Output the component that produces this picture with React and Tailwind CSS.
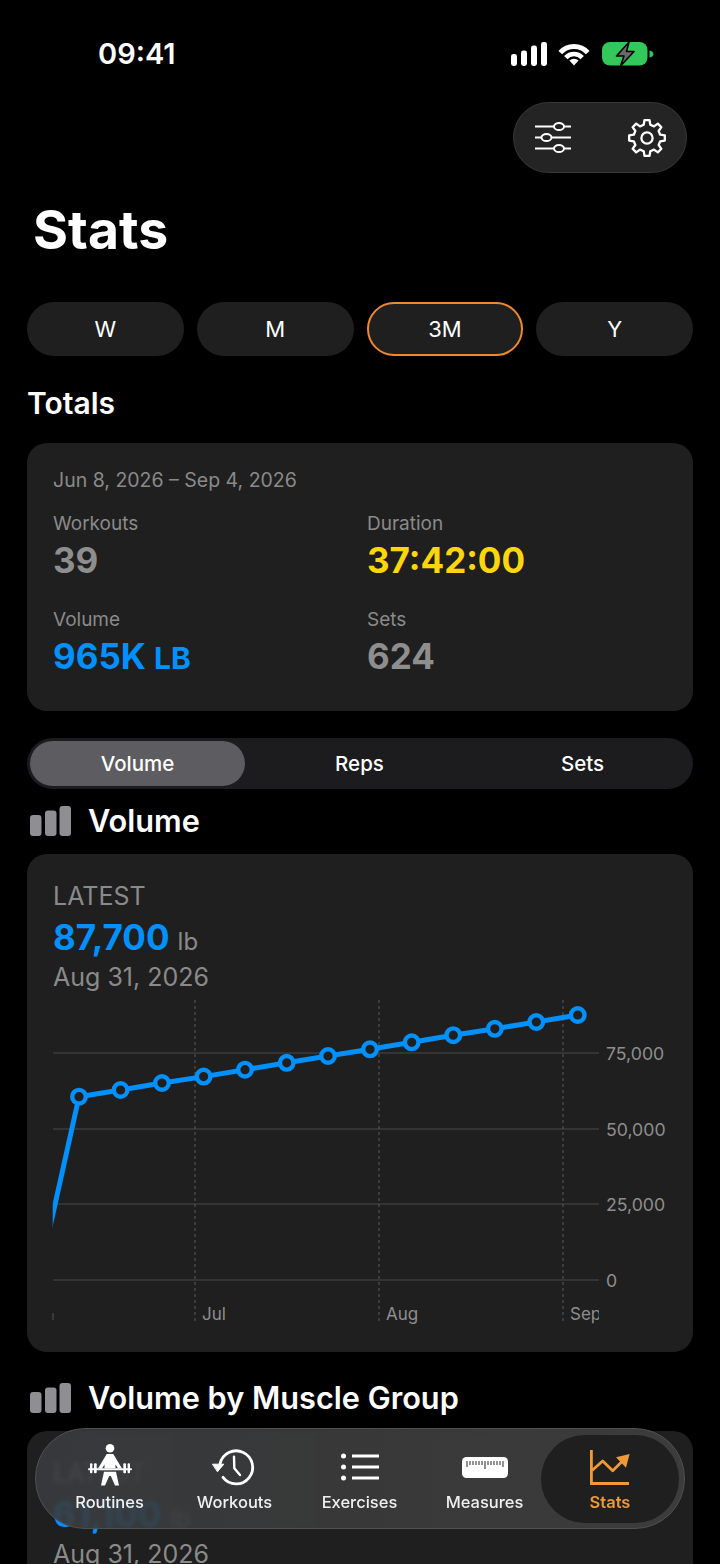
import React from 'react';

const BLUE = '#0091ff';
const CARD = '#1f1f1f';

const points = [
  [79, 1096.7], [120.6, 1090], [162, 1083], [203.6, 1076.6], [245, 1069.7], [286.7, 1062.8], [328, 1056],
  [370, 1049.3], [411.7, 1042.3], [453.3, 1035.2], [494.8, 1028.8], [536.3, 1022], [577.7, 1015],
];

// 8 tooth gear outline, generated so the teeth stay even
const gearPath = () => {
  const cx = 20, cy = 20, out = 18, inner = 13.6, teeth = 8;
  let d = '';
  for (let i = 0; i < teeth; i++) {
    const a = (i * Math.PI * 2) / teeth - Math.PI / 2;
    const w = Math.PI / teeth;
    const stops = [
      [inner, a - w * 0.62], [out, a - w * 0.36], [out, a + w * 0.36], [inner, a + w * 0.62],
    ];
    stops.forEach(([r, t], j) => {
      const x = (cx + r * Math.cos(t)).toFixed(2);
      const y = (cy + r * Math.sin(t)).toFixed(2);
      d += `${i === 0 && j === 0 ? 'M' : 'L'}${x} ${y} `;
    });
  }
  return d + 'Z';
};

const StatusIcons = () => (
  <div className="flex items-center">
    <svg width="36" height="24" viewBox="0 0 36 24" fill="white">
      <rect x="0" y="12" width="6" height="12" rx="2.4" />
      <rect x="10" y="8.5" width="6" height="15.5" rx="2.4" />
      <rect x="20" y="3.5" width="6" height="20.5" rx="2.4" />
      <rect x="30" y="0" width="6" height="24" rx="2.4" />
    </svg>
    <svg className="ml-[11px]" width="32" height="24" viewBox="0 0 32 24" fill="none" stroke="white">
      <path d="M2.3 10.6A18.5 18.5 0 0 1 29.7 10.6" strokeWidth="5" />
      <path d="M7.8 15.6A11 11 0 0 1 24.2 15.6" strokeWidth="4.6" />
      <path d="M16 23.5L11.4 18.6A6.4 6.4 0 0 1 20.6 18.6Z" fill="white" stroke="none" />
    </svg>
    <svg className="ml-[12px]" width="52" height="26" viewBox="0 0 52 26">
      <rect x="0" y="1" width="45.5" height="23.5" rx="8" fill="#34c759" />
      <path d="M47.5 9.5c2.6.5 4 2 4 3.5s-1.4 3-4 3.5z" fill="#34c759" />
      <path d="M27 1L14.5 15H22L18.5 25L32 10.5H24.5Z" fill="#6a6a6a" stroke="#000" strokeWidth="1.6" strokeLinejoin="round" />
    </svg>
  </div>
);

const SlidersIcon = () => (
  <svg width="38" height="34" viewBox="0 0 38 34" fill="none" stroke="white" strokeWidth="2">
    <path d="M1 5.5H37M1 16.5H37M1 27.5H37" />
    <ellipse cx="25" cy="5.5" rx="5" ry="3.6" fill="#242424" />
    <ellipse cx="12.5" cy="16.5" rx="5" ry="3.6" fill="#242424" />
    <ellipse cx="25" cy="27.5" rx="5" ry="3.6" fill="#242424" />
  </svg>
);

const GearIcon = () => (
  <svg width="40" height="40" viewBox="0 0 40 40" fill="none" stroke="white" strokeWidth="2.3" strokeLinejoin="round">
    <path d={gearPath()} />
    <circle cx="20" cy="20" r="5.6" />
  </svg>
);

const BarsIcon = () => (
  <svg width="41" height="30" viewBox="0 0 41 30" fill="#8e8e93">
    <rect x="0" y="9" width="11.5" height="21" rx="3" />
    <rect x="15" y="4.5" width="11.5" height="25.5" rx="3" />
    <rect x="29.5" y="0" width="11.5" height="30" rx="3" />
  </svg>
);

const LiftIcon = () => (
  <svg width="44" height="46" viewBox="0 0 44 46" fill="white">
    <circle cx="22" cy="4.300" r="4.300" />
    <path d="M18.700 10H25.300L34 24.500H30L27.500 20.500V24.300H16.500V20.500L14 24.500H10Z" />
    <path d="M16 27.700H28L31 41.500H27L22.800 32H21.200L17 41.500H13Z" />
    <rect x="0" y="24.300" width="44" height="2" rx="1" />
    <rect x="2" y="19.300" width="2.400" height="10" rx="1" />
    <rect x="6" y="19.300" width="2.700" height="10" rx="1" />
    <rect x="35.300" y="19.300" width="2.700" height="10" rx="1" />
    <rect x="39.600" y="19.300" width="2.400" height="10" rx="1" />
  </svg>
);

const HistoryIcon = () => (
  <svg width="46" height="40" viewBox="0 0 46 40" fill="none" stroke="white" strokeWidth="2.800" strokeLinecap="round" strokeLinejoin="round">
    <path d="M8 17A16.500 16.500 0 1 1 11 30.300" />
    <path d="M0.800 17.200H11.800L5.700 24.500Z" fill="white" strokeWidth="1" />
    <path d="M22 9.700L22.300 21.300L28 28" strokeWidth="2.400" />
  </svg>
);

const ListIcon = () => (
  <svg width="40" height="30" viewBox="0 0 40 30" fill="white" stroke="white">
    <circle cx="3.500" cy="4" r="2.500" stroke="none" />
    <circle cx="3.500" cy="15" r="2.500" stroke="none" />
    <circle cx="3.500" cy="26" r="2.500" stroke="none" />
    <path d="M12 4H39M12 15H39M12 26H39" strokeWidth="3" />
  </svg>
);

const RulerIcon = () => (
  <svg width="46" height="21" viewBox="0 0 46 21">
    <rect x="0" y="0" width="46" height="21" rx="4.500" fill="white" />
    <path
      d="M5 4V10M8 4V8M11 4V8M14 4V8M17 4V8M20 4V8M23 4V12M26 4V8M29 4V8M32 4V8M35 4V8M38 4V8M41 4V10"
      stroke="#3a3a3a"
      strokeWidth="1.100"
    />
  </svg>
);

const TrendIcon = () => (
  <svg width="40" height="35" viewBox="0 0 40 35" fill="none" stroke="#f09a37" strokeWidth="2.800">
    <path d="M1.400 0V33.500H39" />
    <path d="M2 20.500L12.700 11L22.700 20.700L33 10.500" strokeLinejoin="round" />
    <path d="M39.600 4L26 7.300L36 17.800Z" fill="#f09a37" stroke="none" />
  </svg>
);

const Chart = () => {
  const grid = [
    [1053, '75,000'],
    [1129, '50,000'],
    [1204, '25,000'],
    [1280, '0'],
  ];
  const months = [
    [195, 'Jul', 1000],
    [379, 'Aug', 1000],
    [563, 'Sep', 1000],
  ];
  const line = points.map((p) => p.join(' ')).join(' L');

  return (
    <svg className="block" width="666" height="361" viewBox="27 991 666 361" fontFamily="Inter, sans-serif">
      <defs>
        <clipPath id="plot">
          <rect x="52.700" y="991" width="546.300" height="340" />
        </clipPath>
      </defs>
      {grid.map(([y, label]) => (
        <g key={label}>
          <line x1="53" x2="599" y1={y} y2={y} stroke="#4a4a4a" strokeWidth="1.200" />
          <text x="606" y={y + 6.500} fontSize="17.700" fill="#8e8e8e">{label}</text>
        </g>
      ))}
      {months.map(([x, label, top]) => (
        <g key={label} clipPath="url(#plot)">
          <line x1={x} x2={x} y1={top} y2="1323" stroke="#5a5a5a" strokeWidth="1" strokeDasharray="3 3" />
          <text x={x + 7} y="1320" fontSize="17" fill="#8e8e8e">{label}</text>
        </g>
      ))}
      <line x1="53" x2="53" y1="1313" y2="1320" stroke="#555" strokeWidth="1" />
      <g clipPath="url(#plot)">
        <path d={`M48 1236 L${line}`} fill="none" stroke={BLUE} strokeWidth="5" strokeLinejoin="round" />
      </g>
      {points.map(([x, y]) => (
        <circle key={x} cx={x} cy={y} r="6.800" fill={CARD} stroke={BLUE} strokeWidth="4.400" />
      ))}
    </svg>
  );
};

const Stat = ({ label, value, color, unit }) => (
  <div>
    <div className="h-[24px] text-[19px] leading-[24px] text-[#8a8a8a]">{label}</div>
    <div className={`mt-[4px] h-[40px] text-[35px] leading-[40px] font-bold ${color}`}>
      {value}
      {unit && <span className="ml-[8px] text-[30px]">{unit}</span>}
    </div>
  </div>
);

const Latest = ({ value }) => (
  <div className="pl-[26px] pt-[28px]">
    <div className="h-[28px] text-[25px] leading-[28px] text-[#8a8a8a]">LATEST</div>
    <div className="mt-[7px] h-[40px] leading-[40px] text-[#8a8a8a]">
      <span className="text-[35px] font-bold text-[#0091ff]">{value}</span>
      <span className="ml-[8px] text-[24px]">lb</span>
    </div>
    <div className="mt-[6px] h-[28px] text-[25px] leading-[28px] text-[#8a8a8a]">Aug 31, 2026</div>
  </div>
);

const SectionHead = ({ title, className }) => (
  <div className={`flex h-[36px] items-center pl-[3px] ${className}`}>
    <BarsIcon />
    <div className="ml-[17px] text-[30.700px] font-semibold leading-[36px] text-white">{title}</div>
  </div>
);

const Tab = ({ icon, label }) => (
  <div className="flex w-[125px] shrink-0 flex-col items-center">
    <div className="flex h-[46px] w-full items-center justify-center">{icon}</div>
    <div className="mt-[1px] text-[16.500px] font-medium leading-[22px] text-[#f0f0f0]">{label}</div>
  </div>
);

export default function App() {
  const ranges = ['W', 'M', '3M', 'Y'];

  return (
    <div className="relative h-[1564px] w-[720px] overflow-hidden bg-black font-['Inter',sans-serif] text-white">
      {/* status bar */}
      <div className="flex h-[102px] items-start justify-between pl-[98px] pr-[66px] pt-[40px]">
        <div className="text-[29px] font-semibold leading-[28px]">09:41</div>
        <div className="mt-[1px]">
          <StatusIcons />
        </div>
      </div>

      <div className="flex justify-end pr-[33px]">
        <div className="flex h-[71px] w-[174px] items-center justify-between rounded-[36px] border border-[#383838] bg-[#242424] pl-[20px] pr-[19px]">
          <SlidersIcon />
          <GearIcon />
        </div>
      </div>

      <div className="ml-[33px] mt-[27px] h-[60px] text-[53.500px] font-bold leading-[60px]">Stats</div>

      <div className="px-[27px]">
        <div className="mt-[42px] grid grid-cols-4 gap-[13px]">
          {ranges.map((r) => (
            <div
              key={r}
              className={`flex h-[54px] items-center justify-center rounded-[27px] bg-[#1f1f1f] text-[22px] ${r === '3M' ? 'border-2 border-[#f0892c]' : ''}`}
            >
              {r}
            </div>
          ))}
        </div>

        <div className="mt-[29px] h-[36px] text-[30px] font-semibold leading-[36px]">Totals</div>

        <div className="mt-[22px] h-[268px] rounded-[20px] bg-[#1f1f1f] pl-[26px] pt-[25px]">
          <div className="h-[24px] text-[19.500px] leading-[24px] text-[#8a8a8a]">Jun 8, 2026 – Sep 4, 2026</div>
          <div className="mt-[20px] grid grid-cols-[314px_1fr] gap-y-[28px]">
            <Stat label="Workouts" value="39" color="text-[#8e8e8e]" />
            <Stat label="Duration" value="37:42:00" color="text-[#ffd60a]" />
            <Stat label="Volume" value="965K" unit="LB" color="text-[#0091ff]" />
            <Stat label="Sets" value="624" color="text-[#8e8e8e]" />
          </div>
        </div>

        <div className="mt-[27px] flex h-[51px] items-center rounded-[26px] bg-[#1c1c1e] px-[3px] pt-[1px] text-[20.500px] font-medium">
          <div className="-mt-[1px] flex h-[45px] w-[215px] items-center justify-center rounded-[23px] bg-[#5c5c61] pt-[2px]">Volume</div>
          <div className="ml-[14px] w-[201px] text-center">Reps</div>
          <div className="ml-[22px] w-[201px] text-center">Sets</div>
        </div>

        <SectionHead title="Volume" className="mt-[14px]" />

        <div className="mt-[15px] h-[498px] rounded-[20px] bg-[#1f1f1f]">
          <Latest value="87,700" />
          <Chart />
        </div>

        <SectionHead title="Volume by Muscle Group" className="mt-[28px]" />

        <div className="mt-[15px] h-[260px] rounded-[20px] bg-[#1f1f1f]">
          <Latest value="61,100" />
        </div>
      </div>

      {/* floating tab bar */}
      <div className="absolute left-[35px] top-[1428px] flex h-[101px] w-[650px] items-start rounded-[50px] border border-[#505050] bg-gradient-to-r from-[#3a3d40e0] via-[#3a3a3af2] to-[#3c3c3c] pl-[11px] pt-[15px] backdrop-blur-[2px]">
        <Tab label="Routines" icon={<LiftIcon />} />
        <Tab label="Workouts" icon={<HistoryIcon />} />
        <Tab label="Exercises" icon={<ListIcon />} />
        <Tab label="Measures" icon={<RulerIcon />} />
        <div className="absolute left-[505px] top-[6px] flex h-[88px] w-[138px] flex-col items-center rounded-[44px] bg-[#1f1f1f] pt-[15px]">
          <div className="flex h-[35px] items-center">
            <TrendIcon />
          </div>
          <div className="mt-[6px] text-[16.500px] font-semibold leading-[22px] text-[#f09a37]">Stats</div>
        </div>
      </div>
    </div>
  );
}
